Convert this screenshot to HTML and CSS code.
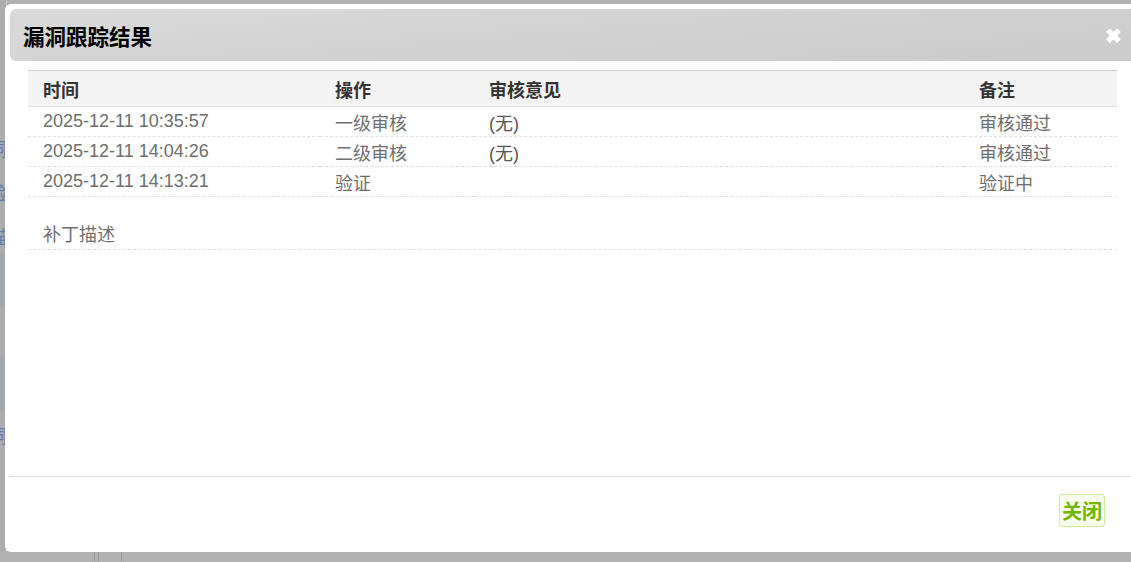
FILE: index.html
```html
<!DOCTYPE html>
<html lang="zh-CN">
<head>
    <meta charset="UTF-8">
    <title>漏洞跟踪结果</title>
    <link rel="stylesheet" href="styles.css">
</head>
<body>
    <!-- underlying page, mostly hidden by the dialog -->
    <div class="page">
        <div class="page-side">
            <span class="side-text t1">洞</span>
            <span class="side-text t2">验</span>
            <span class="side-text t3">描</span>
            <span class="side-band b1"></span>
            <span class="side-band b2"></span>
            <span class="side-text t4">洞</span>
        </div>
        <div class="page-foot">
            <span class="foot-line l1"></span>
            <span class="foot-line l2"></span>
            <span class="foot-line l3"></span>
        </div>
    </div>

    <div class="modal">
        <div class="modal-header">
            <h3>漏洞跟踪结果</h3>
            <span class="modal-close">&#10006;</span>
        </div>
        <div class="modal-body">
            <table class="track-table">
                <colgroup>
                    <col class="c-time">
                    <col class="c-op">
                    <col class="c-opinion">
                    <col class="c-note">
                </colgroup>
                <thead>
                    <tr>
                        <th>时间</th>
                        <th>操作</th>
                        <th>审核意见</th>
                        <th>备注</th>
                    </tr>
                </thead>
                <tbody>
                    <tr>
                        <td>2025-12-11 10:35:57</td>
                        <td>一级审核</td>
                        <td class="opinion">(无)</td>
                        <td>审核通过</td>
                    </tr>
                    <tr>
                        <td>2025-12-11 14:04:26</td>
                        <td>二级审核</td>
                        <td class="opinion">(无)</td>
                        <td>审核通过</td>
                    </tr>
                    <tr>
                        <td>2025-12-11 14:13:21</td>
                        <td>验证</td>
                        <td class="opinion"></td>
                        <td>验证中</td>
                    </tr>
                </tbody>
            </table>
            <div class="patch-desc">补丁描述</div>
        </div>
        <div class="modal-footer">
            <button class="btn-close">关闭</button>
        </div>
    </div>
</body>
</html>
```

FILE: styles.css
```css
/* Base */
html, body {
    margin: 0;
    padding: 0;
    height: 100%;
    overflow: hidden;
}

body {
    background-color: #b0b0b0;
    font-family: "Liberation Sans", "Noto Sans CJK SC", sans-serif;
    color: #333;
}

/* Page behind the overlay */
.page {
    position: relative;
    height: 100%;
}

.page-side {
    position: absolute;
    left: 0;
    top: 0;
    width: 6px;
    height: 552px;
    background-color: #acacac;
    border-right: 1px solid #c4c4c4;
    overflow: hidden;
}

.side-text {
    position: absolute;
    left: -11px;
    font-size: 18px;
    line-height: 18px;
    color: #5a7cb0;
}

.t1 { top: 141px; }
.t2 { top: 185px; }
.t3 { top: 229px; }
.t4 { top: 428px; }

.side-band {
    position: absolute;
    left: 0;
    width: 6px;
    background-color: #a3a8ae;
}

.b1 { top: 253px; height: 54px; }
.b2 { top: 355px; height: 55px; }

.page-foot {
    position: absolute;
    left: 0;
    top: 552px;
    width: 100%;
    height: 10px;
    background-color: #b2b2b2;
}

.foot-line {
    position: absolute;
    top: 0;
    width: 1px;
    height: 10px;
    background-color: #9c9c9c;
}

.l1 { left: 94px; }
.l2 { left: 98px; }
.l3 { left: 121px; }

/* Dialog */
.modal {
    position: absolute;
    left: 5px;
    top: 4px;
    width: 1140px;
    height: 548px;
    box-sizing: border-box;
    padding: 5px;
    background-color: #fff;
    border-radius: 6px;
    display: flex;
    flex-direction: column;
}

.modal-header {
    height: 52px;
    flex-shrink: 0;
    display: flex;
    align-items: center;
    justify-content: space-between;
    padding: 0 10px 0 13px;
    border-radius: 6px;
    background: linear-gradient(175deg, #dadada 0%, #d2d2d2 50%, #cbcbcb 100%);
}

.modal-header h3 {
    margin: 0;
    font-size: 21.5px;
    font-weight: bold;
    color: #000;
}

.modal-close {
    color: #fff;
    font-size: 20px;
    font-weight: bold;
    margin-right: 8px;
    margin-top: 2px;
}

.modal-body {
    flex: 1;
    padding: 9px 18px 0;
}

/* Track table */
.track-table {
    width: 1089px;
    border-collapse: collapse;
    table-layout: fixed;
    font-size: 18px;
}

.c-time { width: 292px; }
.c-op { width: 154px; }
.c-opinion { width: 490px; }

.track-table th {
    text-align: left;
    font-weight: bold;
    color: #333;
    height: 35px;
    padding: 0 15px;
    background-color: #f4f4f4;
    border-top: 1px solid #cfcfcf;
    border-bottom: 1px solid #dedede;
}

.track-table td {
    height: 29px;
    padding: 0 15px;
    color: #6e6e6e;
    border-bottom: 1px dashed #e0e0e0;
    vertical-align: middle;
}

.track-table td.opinion {
    color: #555;
}

.patch-desc {
    width: 1089px;
    box-sizing: border-box;
    margin-top: 23px;
    height: 30px;
    line-height: 31px;
    padding: 0 15px;
    font-size: 18px;
    color: #707070;
    border-bottom: 1px dashed #e0e0e0;
}

/* Footer */
.modal-footer {
    height: 71px;
    flex-shrink: 0;
    box-sizing: border-box;
    border-top: 1px solid #dcdcdc;
    display: flex;
    justify-content: flex-end;
    align-items: flex-start;
    padding: 17px 35px 0 0;
}

.btn-close {
    font-family: "Noto Sans CJK SC", sans-serif;
    font-size: 20px;
    font-weight: bold;
    color: #72b600;
    background-color: #f8fdee;
    border: 1px solid #cdeda0;
    border-radius: 3px;
    padding: 0;
    width: 46px;
    height: 33px;
    line-height: 31px;
}
```
